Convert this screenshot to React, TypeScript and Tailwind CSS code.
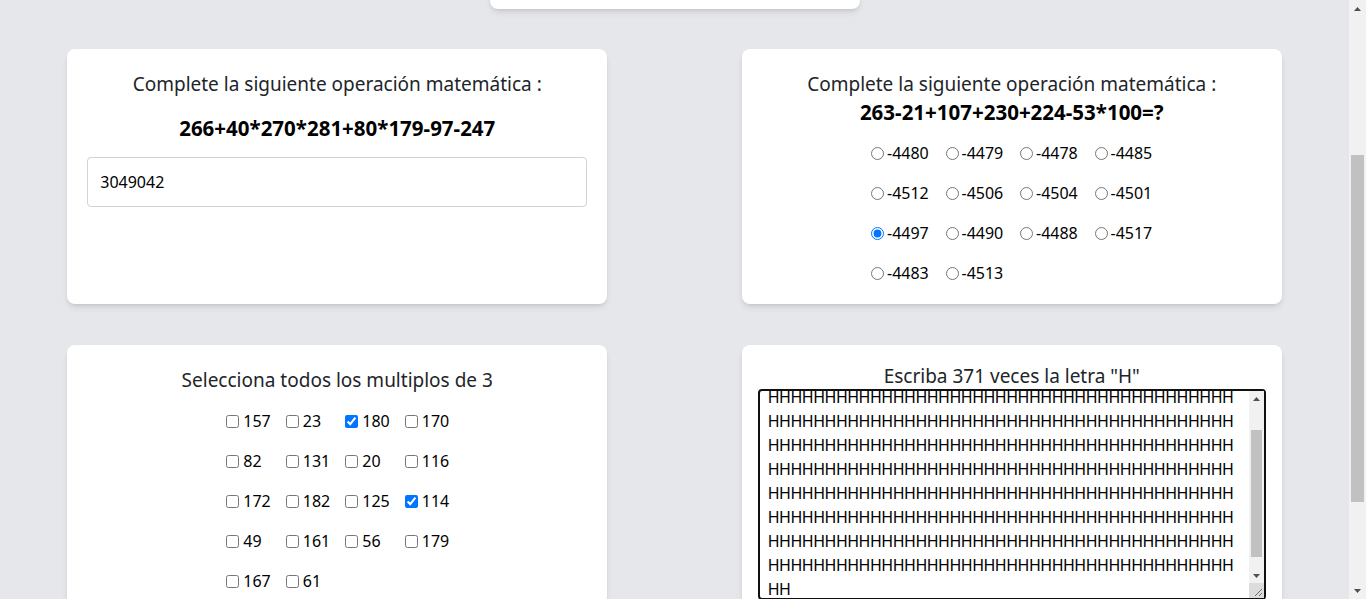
import React, { useLayoutEffect, useRef } from 'react';

const radios = ['-4480', '-4479', '-4478', '-4485', '-4512', '-4506', '-4504', '-4501', '-4497', '-4490', '-4488', '-4517', '-4483', '-4513'];
const multiples = [157, 23, 180, 170, 82, 131, 20, 116, 172, 182, 125, 114, 49, 161, 56, 179, 167, 61];
const letters = 'H'.repeat(371);

const Arrow: React.FC<{ down?: boolean }> = ({ down }) => (
  <svg width="7" height="4" viewBox="0 0 7 4" className="fill-[#505050]">
    <polygon points={down ? '0,0 7,0 3.5,4' : '0,4 7,4 3.5,0'} />
  </svg>
);

const PageScrollbar: React.FC = () => (
  <div className="fixed right-0 top-0 flex h-screen w-[17px] flex-col bg-[#f1f1f1]">
    <div className="flex h-[17px] shrink-0 items-center justify-center"><Arrow /></div>
    <div className="h-[138px] shrink-0"></div>
    <div className="mx-[2px] h-[347px] shrink-0 bg-[#c1c1c1]"></div>
    <div className="flex-1"></div>
    <div className="flex h-[17px] shrink-0 items-center justify-center"><Arrow down /></div>
  </div>
);

const AreaScrollbar: React.FC = () => (
  <div className="pointer-events-none absolute bottom-[2px] right-[2px] top-[2px] flex w-[15px] flex-col bg-[#f1f1f1]">
    <div className="flex h-[15px] shrink-0 items-center justify-center"><Arrow /></div>
    <div className="h-[24px] shrink-0"></div>
    <div className="mx-[2px] h-[127px] shrink-0 bg-[#c1c1c1]"></div>
    <div className="flex-1"></div>
    <div className="flex h-[15px] shrink-0 items-center justify-center"><Arrow down /></div>
    <div className="flex h-[15px] shrink-0 items-end justify-end bg-[#dcdcdc]">
      <svg width="15" height="15" viewBox="0 0 15 15" className="stroke-[#6b6b6b]">
        <line x1="13" y1="6" x2="6" y2="13" strokeWidth="1" />
        <line x1="13" y1="10" x2="10" y2="13" strokeWidth="1" />
      </svg>
    </div>
  </div>
);

const App: React.FC = () => {
  const areaRef = useRef<HTMLTextAreaElement>(null);

  useLayoutEffect(() => {
    window.scrollTo(0, 240);
    const el = areaRef.current;
    if (el) {
      el.focus({ preventScroll: true });
      el.setSelectionRange(letters.length, letters.length);
      el.scrollTop = 38;
    }
  }, []);

  return (
    <div className="min-h-screen bg-[#e5e7eb] text-[#212529] font-['Noto_Sans',sans-serif]">
      <div className="w-[1349px] pb-10 pt-10">
        <div className="mx-auto h-[209px] w-[370px] rounded-lg bg-white shadow-md"></div>

        <div className="mt-10 grid grid-cols-2 justify-items-center gap-y-[41px]">
          <div className="h-[255px] w-[540px] rounded-lg bg-white px-5 pt-[21px] shadow-md">
            <p className="text-center text-[19px] leading-7">Complete la siguiente operación matemática :</p>
            <p className="mt-4 text-center text-[20.5px] font-bold leading-7 text-black">266+40*270*281+80*179-97-247</p>
            <input
              type="text"
              defaultValue="3049042"
              className="mt-[15px] h-[50px] w-full rounded border border-[#ced4da] px-3 text-base text-black outline-none"
            />
          </div>

          <div className="h-[255px] w-[540px] rounded-lg bg-white px-5 pt-[21px] shadow-md">
            <p className="text-center text-[19px] leading-7">Complete la siguiente operación matemática :</p>
            <p className="text-center text-[20.5px] font-bold leading-7 text-black">263-21+107+230+224-53*100=?</p>
            <div className="mt-[7px] grid grid-cols-[repeat(4,58px)] justify-center gap-x-[16.5px]">
              {radios.map((r) => (
                <label key={r} className="flex h-10 items-center gap-[3px] whitespace-nowrap text-base text-black">
                  <input type="radio" name="op" defaultChecked={r === '-4497'} className="m-0 h-[13px] w-[13px]" />
                  {r}
                </label>
              ))}
            </div>
          </div>

          <div className="h-[356px] w-[540px] rounded-lg bg-white px-5 pt-[21px] shadow-md">
            <p className="text-center text-[19px] leading-7">Selecciona todos los multiplos de 3</p>
            <div className="mt-[7px] grid grid-cols-[repeat(4,43.5px)] justify-center gap-x-4">
              {multiples.map((n) => (
                <label key={n} className="flex h-10 items-center gap-1 whitespace-nowrap text-base text-black">
                  <input type="checkbox" defaultChecked={n === 180 || n === 114} className="m-0 h-[13px] w-[13px]" />
                  {n}
                </label>
              ))}
            </div>
          </div>

          <div className="h-[356px] w-[540px] rounded-lg bg-white pt-[17px] shadow-md">
            <p className="text-center text-[19px] leading-7">Escriba 371 veces la letra "H"</p>
            <div className="relative mx-auto -mt-px w-[508px]">
              <textarea
                ref={areaRef}
                defaultValue={letters}
                className="block h-[211px] w-full resize-none rounded border-2 border-[#101010] py-2 pl-2 pr-[25px] text-base leading-6 tracking-[-0.5px] text-black outline-none"
              />
              <AreaScrollbar />
            </div>
          </div>
        </div>
      </div>
      <PageScrollbar />
    </div>
  );
};

export default App;
